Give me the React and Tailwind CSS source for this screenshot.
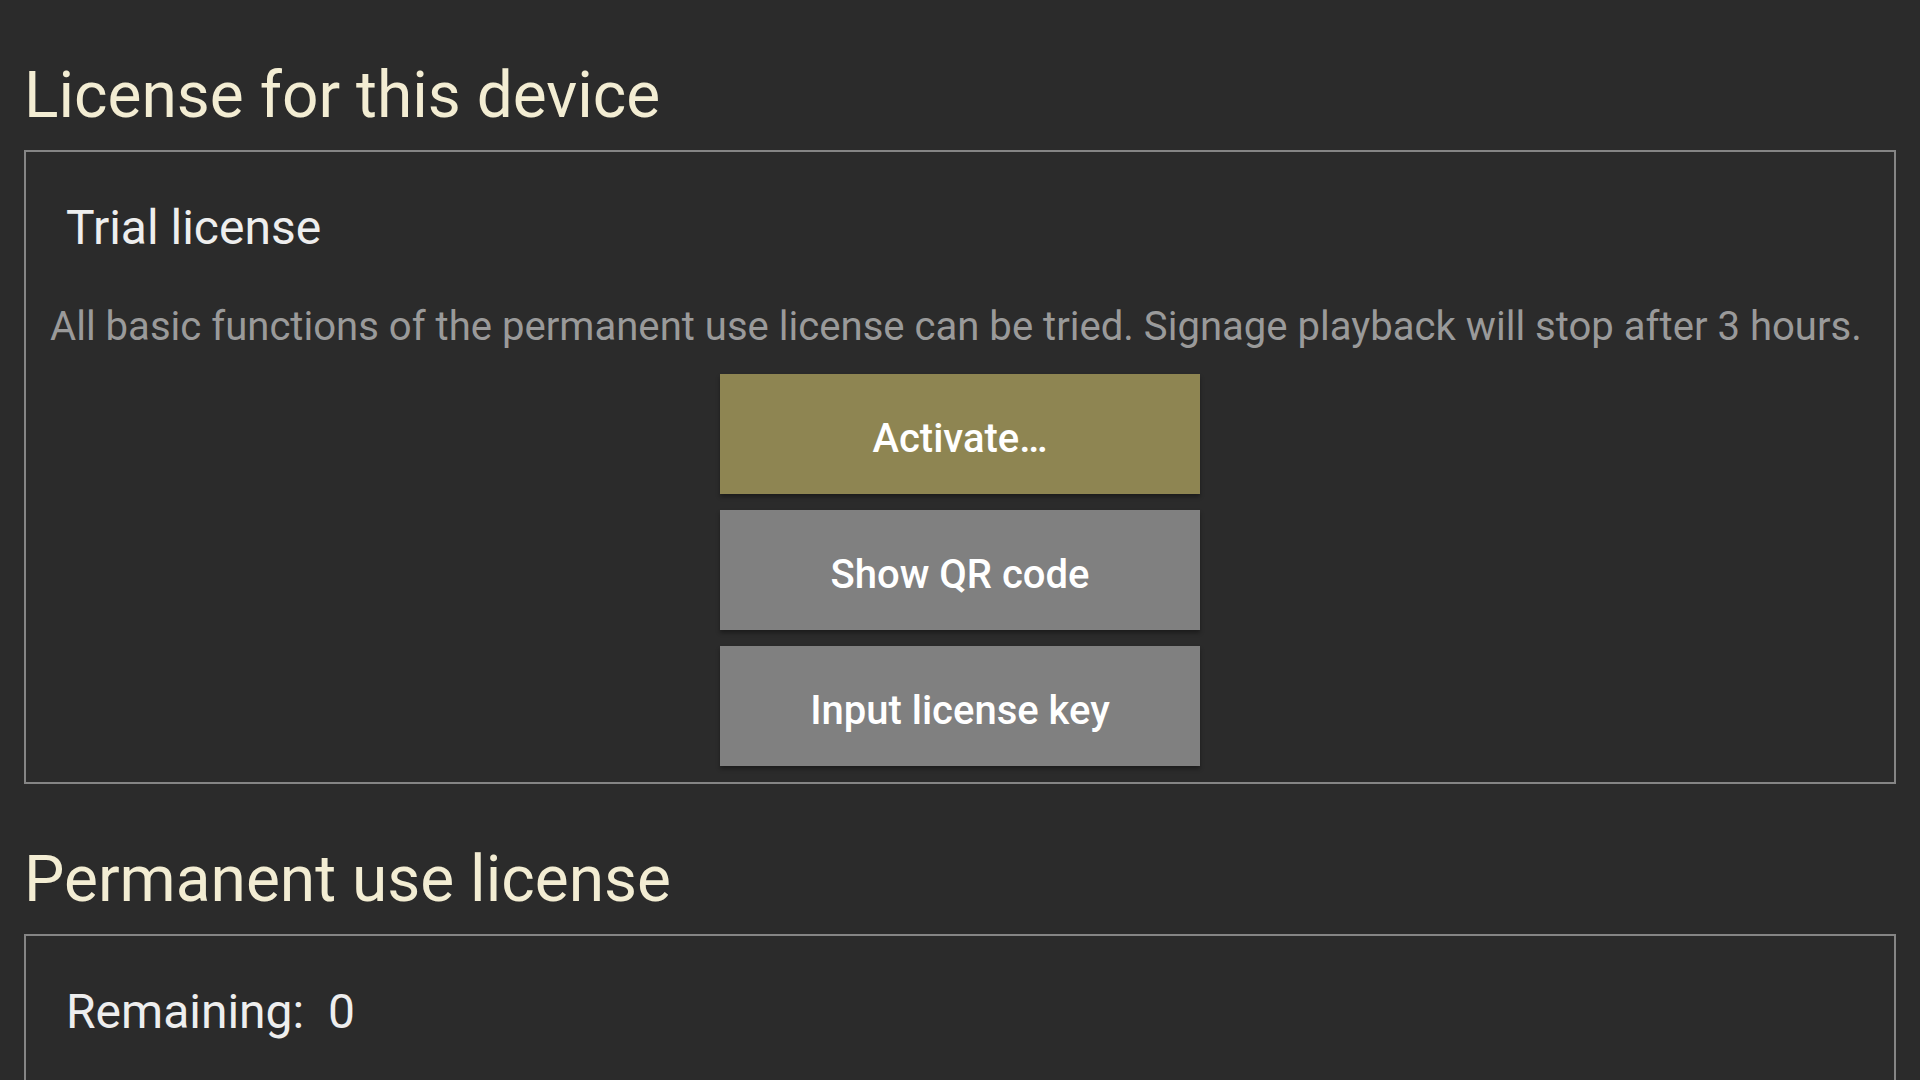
import React from "react";

// License settings screen

const font = { fontFamily: "Roboto, 'Noto Sans', sans-serif" };

function Section({ title, children, className = "" }) {
  return (
    <section>
      <h2 className="text-[64px] leading-[64px] font-normal text-[#f3edd3]">{title}</h2>
      <div className={"mt-[22px] border-2 border-[#858585] " + className}>{children}</div>
    </section>
  );
}

function Button({ label, primary }) {
  return (
    <button
      className={
        "w-[480px] h-[120px] pt-[10px] flex items-center justify-center text-[40px] font-medium text-white shadow-[0_3px_4px_rgba(0,0,0,0.35)] " +
        (primary ? "bg-[#8e8552]" : "bg-[#808080]")
      }
    >
      {label}
    </button>
  );
}

export default function App() {
  return (
    <div className="min-h-screen bg-[#2b2b2b] px-[24px] pt-[64px] pb-[40px]" style={font}>
      <Section title="License for this device" className="pt-[52px] pb-[16px]">
        <div className="pl-[40px] text-[48px] leading-[48px] text-[#eeeeee]">Trial license</div>
        <p className="mt-[55px] pl-[24px] pr-[16px] text-[40.1px] leading-[40px] text-[#9a9a9a]">
          All basic functions of the permanent use license can be tried. Signage playback will stop after 3 hours.
        </p>
        <div className="mt-[27px] flex flex-col items-center gap-[16px]">
          <Button label="Activate…" primary />
          <Button label="Show QR code" />
          <Button label="Input license key" />
        </div>
      </Section>

      <div className="mt-[64px]">
        <Section title="Permanent use license" className="pt-[52px] pb-[120px]">
          <div className="pl-[40px] text-[48px] leading-[48px] text-[#eeeeee] whitespace-pre">Remaining:  0</div>
        </Section>
      </div>
    </div>
  );
}
